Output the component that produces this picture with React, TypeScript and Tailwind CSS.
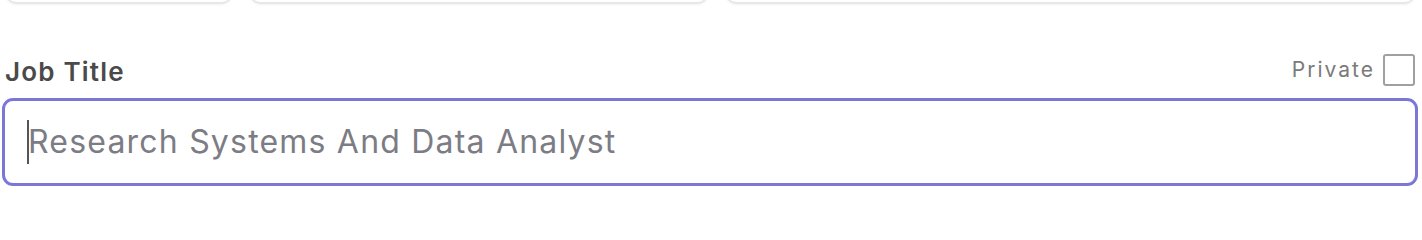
export default function App() {
  return (
    <div className="w-[1422px] h-[224px] overflow-hidden bg-white" style={{ fontFamily: "Inter, 'Noto Sans', sans-serif" }}>
      {/* previous row of inputs, only their bottom edges show */}
      <div className="-mt-[40px] flex gap-[18px] pl-[6px] pr-[7px]">
        <div className="h-[43px] w-[226px] rounded-[10px] border border-gray-200 bg-white shadow-sm" />
        <div className="h-[43px] w-[458px] rounded-[10px] border border-gray-200 bg-white shadow-sm" />
        <div className="h-[43px] flex-1 rounded-[10px] border border-gray-200 bg-white shadow-sm" />
      </div>

      <div className="mt-[50px] pl-[2px] pr-[4px]">
        <div className="flex h-[33px] items-center justify-between">
          <label className="pl-[3px] pt-[4px] text-[26px] font-semibold leading-[30px] tracking-[1.2px] text-[#4a4a4a]">Job Title</label>
          <div className="mr-[3px] flex items-center gap-[8px]">
            <span className="text-[21px] leading-[28px] tracking-[2px] text-[#7a7a7a]">Private</span>
            <input type="checkbox" className="h-[32px] w-[32px] appearance-none rounded-[3px] border-2 border-[#a0a0a0] bg-white" />
          </div>
        </div>
        <div className="mt-[12px] flex h-[88px] items-center rounded-[11px] border-[3px] border-[#7b76d8] bg-white px-[22px]">
          <div className="h-[44px] w-[2px] bg-[#555]" />
          <span className="-ml-[1px] text-[32px] tracking-[1.2px] text-[#7c7c84]">Research Systems And Data Analyst</span>
        </div>
      </div>
    </div>
  );
}
